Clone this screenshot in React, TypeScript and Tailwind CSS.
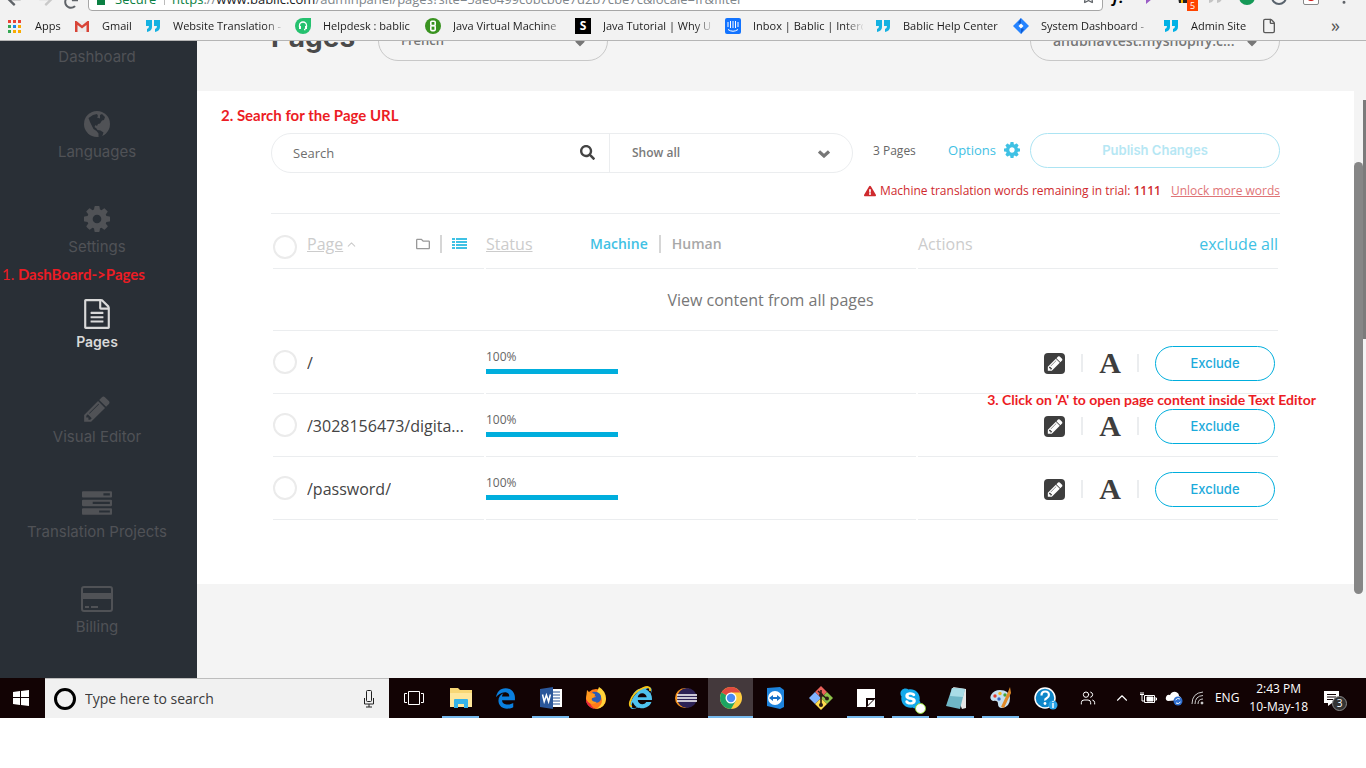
import type { ReactNode } from "react";
import {
  FaArrowLeft,
  FaArrowRight,
  FaCaretDown,
  FaEdgeLegacy,
  FaExclamationTriangle,
  FaInternetExplorer,
  FaRedo,
  FaRegFolder,
  FaRegStar,
  FaSearch,
  FaSkype,
} from "react-icons/fa";
import { ChevronUp, EllipsisVertical, File, Users } from "lucide-react";

type IconProps = { className?: string };

const FileTextIcon = ({ className }: IconProps) => (
  <svg viewBox="0 0 1792 1792" className={className} fill="currentColor" aria-hidden="true">
    <path d="M1596 380q28 28 48 76t20 88v1152q0 40-28 68t-68 28h-1344q-40 0-68-28t-28-68v-1600q0-40 28-68t68-28h896q40 0 88 20t76 48zm-444-244v376h376q-10-29-22-41l-313-313q-12-12-41-22zm384 1528v-1024h-416q-40 0-68-28t-28-68v-416h-768v1536h1280zm-1024-864q0-14 9-23t23-9h704q14 0 23 9t9 23v64q0 14-9 23t-23 9h-704q-14 0-23-9t-9-23v-64zm736 224q14 0 23 9t9 23v64q0 14-9 23t-23 9h-704q-14 0-23-9t-9-23v-64q0-14 9-23t23-9h704zm0 256q14 0 23 9t9 23v64q0 14-9 23t-23 9h-704q-14 0-23-9t-9-23v-64q0-14 9-23t23-9h704z" />
  </svg>
);

const PENCIL =
  "M491 1536l91-91-235-235-91 91v107h128v128h107zm523-928q0-22-22-22-10 0-17 7l-542 542q-7 7-7 17 0 22 22 22 10 0 17-7l542-542q7-7 7-17zm-54-192l416 416-832 832h-416v-416zm683 96q0 53-37 90l-166 166-416-416 166-165q36-38 90-38 53 0 91 38l235 234q37 39 37 91z";

const PencilIcon = ({ className }: IconProps) => (
  <svg viewBox="0 128 1792 1536" className={className} fill="currentColor" aria-hidden="true">
    <path d={PENCIL} />
  </svg>
);

const PencilSquareIcon = () => (
  <svg viewBox="0 0 21 21" className="size-[21px]" aria-hidden="true">
    <rect width="21" height="21" rx="4" fill="#3e3e3e" />
    <g transform="translate(2.6 1.8) scale(0.0096)" fill="#fff">
      <path d={PENCIL} />
    </g>
  </svg>
);

const GearIcon = ({ className }: IconProps) => (
  <svg viewBox="128 128 1536 1536" className={className} fill="currentColor" aria-hidden="true">
    <path d="M1152 896q0-106-75-181t-181-75-181 75-75 181 75 181 181 75 181-75 75-181zm512-109v222q0 12-8 23t-20 13l-185 28q-19 54-39 91 35 50 107 138 10 12 10 25t-9 23q-27 37-99 108t-94 71q-12 0-26-9l-138-108q-44 23-91 38-16 136-29 186-7 28-36 28h-222q-14 0-24.5-8.500t-11.500-21.500l-28-184q-49-16-90-37l-141 107q-10 9-25 9-14 0-25-11-126-114-165-168-7-10-7-23 0-12 8-23 15-21 51-66.500t54-70.500q-27-50-41-99l-183-27q-13-2-21-12.500t-8-23.500v-222q0-12 8-23t19-13l186-28q14-46 39-92-40-57-107-138-10-12-10-24 0-10 9-23 26-36 98.500-107.500t94.500-71.500q13 0 26 10l138 107q44-23 91-38 16-136 29-186 7-28 36-28h222q14 0 24.500 8.500t11.500 21.500l28 184q49 16 90 37l142-107q9-9 24-9 13 0 25 10 129 119 165 170 7 8 7 22 0 12-8 23-15 21-51 66.500t-54 70.500q26 50 41 98l183 28q13 2 21 12.500t8 23.500z" />
  </svg>
);

const GlobeIcon = ({ className }: IconProps) => (
  <svg viewBox="0 0 26 26" className={className} aria-hidden="true">
    <circle cx="13" cy="13" r="13" fill="currentColor" />
    <path d="M4.500 7L9 4l4-1 1 2-1 1.500 3 1L16 4l2-1 3 3-1 3-2 .5-2 3-2 .5-1 2-1.500-1-1 2 2 1.500 1 1.500 3 .5 3 2-1 3-2 2-2-1v-3l-2-2.500-3-2L6 11z" fill="#292f36" />
  </svg>
);

const ChevronDownIcon = ({ className }: IconProps) => (
  <svg viewBox="0 0 12 8" className={className} fill="none" stroke="currentColor" strokeWidth="3.200" aria-hidden="true">
    <path d="M1 1.500l5 4.500 5-4.500" />
  </svg>
);

const TasksIcon = ({ className }: IconProps) => (
  <svg viewBox="0 0 1792 1792" className={className} fill="currentColor" aria-hidden="true">
    <path d="M1024 1408h640v-128h-640v128zm-384-512h1024v-128h-1024v128zm640-512h384v-128h-384v128zm512 832v256q0 26-19 45t-45 19h-1664q-26 0-45-19t-19-45v-256q0-26 19-45t45-19h1664q26 0 45 19t19 45zm0-512v256q0 26-19 45t-45 19h-1664q-26 0-45-19t-19-45v-256q0-26 19-45t45-19h1664q26 0 45 19t19 45zm0-512v256q0 26-19 45t-45 19h-1664q-26 0-45-19t-19-45v-256q0-26 19-45t45-19h1664q26 0 45 19t19 45z" />
  </svg>
);

const CardIcon = ({ className }: IconProps) => (
  <svg viewBox="0 0 32 26" className={className} fill="currentColor" aria-hidden="true">
    <rect x="1" y="1" width="30" height="24" rx="2" fill="none" stroke="currentColor" strokeWidth="2" />
    <path d="M1 7h30v6H1zM4 20h4v2H4zM10 20h7v2h-7z" />
  </svg>
);

const DashboardIcon = ({ className }: IconProps) => (
  <svg viewBox="0 0 26 26" className={className} fill="currentColor" aria-hidden="true">
    <path d="M0 0h11v12H0zM14 0h12v8H14zM0 15h26v9H0z" />
  </svg>
);

const ListIcon = () => (
  <svg viewBox="0 0 15 12" className="h-3 w-[15px]" fill="currentColor" aria-hidden="true">
    <path d="M0 0h3v2H0zM4 0h11v2H4zM0 3h3v2H0zM4 3h11v2H4zM0 6h3v2H0zM4 6h11v2H4zM0 9h3v2H0zM4 9h11v2H4z" />
  </svg>
);

const QuotesIcon = ({ color = "#14b1e1" }: { color?: string }) => (
  <svg viewBox="0 0 16 16" className="size-4" fill={color} aria-hidden="true">
    <path d="M1 2h6v7q0 4-5 5v-3q2-.5 2-3H1zM9 2h6v7q0 4-5 5v-3q2-.5 2-3H9z" />
  </svg>
);

const AppsIcon = () => (
  <svg viewBox="0 0 16 16" className="size-4" aria-hidden="true">
    <path d="M1 2h3v3H1zM6 2h3v3H6zM11 2h3v3h-3z" fill="#ea4335" />
    <path d="M1 7h3v3H1zM1 12h3v3H1z" fill="#34a853" />
    <path d="M6 7h3v3H6z" fill="#1a86e8" />
    <path d="M6 12h3v3H6zM11 12h3v3h-3zM11 7h3v3h-3z" fill="#f9ab00" />
  </svg>
);

const GmailIcon = () => (
  <svg viewBox="0 0 16 16" className="size-4" aria-hidden="true">
    <path d="M1 3h14v11H1z" fill="#ececec" />
    <path d="M3.500 14V7L8 10.500 12.500 7v7H15V3h-1.500L8 7.500 2.500 3H1v11z" fill="#d84437" />
  </svg>
);

const HelpdeskIcon = () => (
  <svg viewBox="0 0 16 16" className="size-4" aria-hidden="true">
    <path d="M8 0h8v8a8 8 0 1 1-8-8z" fill="#25c16f" />
    <path d="M4.500 9V7.500a3.500 3.500 0 0 1 7 0V9M10.500 11.500H9" stroke="#fff" strokeWidth="1.300" fill="none" />
    <path d="M4 8h2v3H4zM10 8h2v3h-2z" fill="#fff" />
  </svg>
);

const JvmIcon = () => (
  <svg viewBox="0 0 16 16" className="size-4" aria-hidden="true">
    <circle cx="8" cy="8" r="8" fill="#399320" />
    <rect x="5.800" y="3.200" width="4.400" height="4.300" rx="1" fill="none" stroke="#fff" strokeWidth="1.600" />
    <rect x="5.800" y="7.800" width="4.400" height="4.800" rx="1" fill="none" stroke="#fff" strokeWidth="1.600" />
  </svg>
);

const IntercomIcon = () => (
  <svg viewBox="0 0 16 16" className="size-4" aria-hidden="true">
    <rect width="16" height="16" rx="2" fill="#1273ff" />
    <path d="M3 4v5M5.500 3v7M8 3v7M10.500 3v7M13 4v5M3 11.500q5 3.500 10 0" stroke="#fff" fill="none" />
  </svg>
);

const JiraIcon = () => (
  <svg viewBox="0 0 16 16" className="size-4" aria-hidden="true">
    <path d="M8 0l8 8-8 8-8-8z" fill="#2684ff" />
    <path d="M8 0l-3 5 3 1zM8 16l3-5-3-1z" fill="#0f5bd0" />
    <path d="M8 5.500L10.500 8 8 10.500 5.500 8z" fill="#fff" />
  </svg>
);

const bookmarks: { label: string; icon: ReactNode; width: string }[] = [
  { label: "Apps", icon: <AppsIcon />, width: "w-[67px]" },
  { label: "Gmail", icon: <GmailIcon />, width: "w-[71px]" },
  { label: "Website Translation -", icon: <QuotesIcon />, width: "w-[150px]" },
  { label: "Helpdesk : bablic", icon: <HelpdeskIcon />, width: "w-[130px]" },
  { label: "Java Virtual Machine", icon: <JvmIcon />, width: "w-[150px]" },
  {
    label: "Java Tutorial | Why U",
    icon: <span className="flex size-4 items-center justify-center bg-black font-['Open_Sans',sans-serif] text-xs font-bold text-white">S</span>,
    width: "w-[150px]",
  },
  { label: "Inbox | Bablic | Interc", icon: <IntercomIcon />, width: "w-[150px]" },
  { label: "Bablic Help Center", icon: <QuotesIcon />, width: "w-[138px]" },
  { label: "System Dashboard -", icon: <JiraIcon />, width: "w-[150px]" },
  { label: "Admin Site", icon: <QuotesIcon color="#00b1e5" />, width: "w-[98px]" },
];

function BrowserChrome() {
  return (
    <div className="shrink-0 border-b border-[#b5b5b5] bg-[#f2f2f2] font-['Open_Sans',sans-serif]">
      <div className="flex h-[11px] items-end overflow-hidden pr-[5px] text-[#5f6368]">
        <button className="mb-1 ml-1.5 shrink-0" aria-label="Back"><FaArrowLeft size={16} /></button>
        <button className="mb-1 ml-4 shrink-0 text-[#c9c9c9]" aria-label="Forward"><FaArrowRight size={16} /></button>
        <button className="mb-0.5 ml-2.5 shrink-0" aria-label="Reload"><FaRedo size={14} /></button>
        <div className="ml-2.5 flex h-7 flex-1 items-start rounded border border-[#a6a6a6] bg-white pt-[5px] pl-2 text-[13px] leading-5">
          <span className="mt-1.5 h-2.5 w-2 bg-[#0b8043]" />
          <span className="ml-2.5 w-[49px] text-[#0b8043]">Secure</span>
          <span className="mr-[7px] h-4 w-px bg-[#bbb]" />
          <span className="flex-1 whitespace-nowrap text-[#80868b]">
            <span className="text-[#0b8043]">https</span>://<span className="text-[#202124]">www.bablic.com</span>
            /adminpanel/pages?site=5ae6499c0bcb0e7d2b7cbe7c&amp;locale=fr&amp;filter
          </span>
          <FaRegStar size={15} className="mr-1.5" />
        </div>
        <div className="flex h-7 shrink-0 items-center">
          <span className="w-8 text-center text-[15px] font-bold text-black italic">f?</span>
          <svg viewBox="0 0 16 16" className="mx-2 size-4" fill="#9a5cc6"><path d="M3 0h10L9 10l-6 5z" /></svg>
          <span className="relative mx-2 size-4">
            <svg viewBox="0 0 16 16" className="size-4"><path d="M2 2h12v12H4z" fill="#222" /><path d="M6 8h2v6H6z" fill="#f2b300" /></svg>
            <span className="absolute top-[11px] left-3 flex h-[11px] w-[11px] items-center justify-center bg-[#ff4500] text-[9px] text-white">5</span>
          </span>
          <span className="mx-2"><QuotesIcon color="#c4c4c4" /></span>
          <span className="mx-2 size-4 rounded-full bg-[#159957]" />
          <span className="mx-2 size-4 rounded-full border-2 border-[#59636d]" />
          <span className="mx-2 flex size-4 items-center justify-center rounded-xs border border-[#888] bg-white"><span className="size-2 rounded-full bg-[#d01010]" /></span>
          <EllipsisVertical size={18} className="mx-2" />
        </div>
      </div>
      <nav className="flex h-[29px] items-center overflow-hidden pl-[7px] text-[11px] text-[#1c1c1c]">
        {bookmarks.map((b) => (
          <a key={b.label} href="#" className={`flex shrink-0 items-center gap-3 pt-px pr-3 ${b.width}`}>
            <span className="shrink-0">{b.icon}</span>
            <span className="flex-1 overflow-hidden whitespace-nowrap mask-[linear-gradient(to_right,#000_92px,transparent_112px)]">{b.label}</span>
          </a>
        ))}
        <a href="#" aria-label="Untitled bookmark"><File size={16} className="text-[#5a5a5a]" /></a>
        <button className="mr-[26px] mb-0.5 ml-auto text-lg text-[#555]" aria-label="More bookmarks">»</button>
      </nav>
    </div>
  );
}

const menu = [
  { label: "Dashboard", icon: <DashboardIcon className="size-[26px]" /> },
  { label: "Languages", icon: <GlobeIcon className="size-[26px]" /> },
  { label: "Settings", icon: <GearIcon className="size-[26px]" /> },
  { label: "Pages", icon: <FileTextIcon className="size-[30px]" />, active: true },
  { label: "Visual Editor", icon: <PencilIcon className="size-[30px]" /> },
  { label: "Translation Projects", icon: <TasksIcon className="size-[30px]" /> },
  { label: "Billing", icon: <CardIcon className="h-[26px] w-8" /> },
];

function Sidebar() {
  return (
    <aside className="relative flex w-[197px] shrink-0 flex-col justify-end overflow-hidden bg-[#292f36] pb-[41px]">
      <nav className="flex flex-col gap-[42px] pr-[3px] font-[Inter,sans-serif]">
        {menu.map((m) => (
          <a key={m.label} href="#" className={`flex flex-col items-center gap-[3px] ${m.active ? "text-sm font-semibold text-[#d9d9d9]" : "text-[15px] text-[#505256]"}`}>
            <span className="flex h-[30px] items-center">{m.icon}</span>
            <span className="leading-5">{m.label}</span>
          </a>
        ))}
      </nav>
      <Note className="top-[223px] left-0.5 text-[15px]"><span className="font-normal">1.</span> DashBoard-&gt;Pages</Note>
    </aside>
  );
}

function Note({ className, children }: { className: string; children: ReactNode }) {
  return (
    <p className={`absolute font-[Lato,sans-serif] leading-5 font-bold whitespace-nowrap text-[#ec1c24] ${className}`}>{children}</p>
  );
}

function Header() {
  return (
    <header className="flex h-[50px] items-end overflow-hidden px-[74px] pb-[30px] text-[#777]">
      <h1 className="mb-1.5 w-[107px] font-[Inter,sans-serif] text-[28px] leading-9 font-bold text-[#4a4a4a]">Pages</h1>
      <div className="relative w-[230px]">
        <select aria-label="Language" className="h-10 w-full appearance-none rounded-full border border-[#c8c8c8] pl-[22px] text-[13px] font-semibold">
          <option>French</option>
        </select>
        <FaCaretDown size={16} className="absolute top-3.5 right-5" />
      </div>
      <div className="relative ml-auto w-[250px]">
        <select aria-label="Site" className="h-10 w-full appearance-none rounded-full border border-[#c8c8c8] pl-[22px] text-sm font-semibold">
          <option>anubhavtest.myshopify.c...</option>
        </select>
        <FaCaretDown size={16} className="absolute top-3.5 right-5" />
      </div>
    </header>
  );
}

function Filters() {
  return (
    <div className="flex items-start">
      <div className="flex h-10 w-[582px] rounded-full border border-[#ebedef]">
        <div className="relative flex-1 border-r border-[#ebedef]">
          <input type="text" aria-label="Search" placeholder="Search" className="h-full w-full pl-[21px] text-[13px] outline-none placeholder:text-[#6e6e6e]" />
          <FaSearch size={15} className="absolute top-[11px] right-3.5 text-[#444]" />
        </div>
        <div className="relative w-[242px]">
          <select aria-label="Show" className="h-full w-full appearance-none pl-[22px] text-xs font-semibold text-[#7a7a7a] outline-none">
            <option>Show all</option>
          </select>
          <ChevronDownIcon className="absolute top-4 right-[22px] h-2 w-3 text-[#777]" />
        </div>
      </div>
      <span className="mt-2 ml-5 text-xs leading-5 whitespace-nowrap text-[#666]">3 Pages</span>
      <button className="mt-[7px] ml-auto flex items-center gap-2 text-[13px] leading-5 text-[#3fc1e4]">
        Options <GearIcon className="size-4" />
      </button>
      <button disabled className="ml-2.5 h-[35px] w-[250px] rounded-full border border-[#ace4f3] font-[Inter,sans-serif] text-[13px] font-semibold text-[#b6e7f4]">
        Publish Changes
      </button>
    </div>
  );
}

const pages = [
  { path: "/", percent: 100 },
  { path: "/3028156473/digita...", percent: 100 },
  { path: "/password/", percent: 100 },
];

function Check({ label }: { label: string }) {
  return <input type="checkbox" aria-label={label} className="size-6 shrink-0 appearance-none rounded-full border-2 border-[#ebebeb]" />;
}

const Bar = () => <span className="h-[18px] w-0.5 bg-[#ebedef]" />;

function PagesTable() {
  return (
    <table className="w-full table-fixed border-separate border-spacing-0.5">
      <colgroup>
        <col className="w-[211px]" />
        <col />
        <col className="w-[360px]" />
      </colgroup>
      <thead>
        <tr className="text-left text-base text-[#ccc]">
          <th className="h-[53px] border-b border-[#ebedef] p-0 font-normal">
            <div className="flex items-center pt-1">
              <span className="mt-1.5 flex"><Check label="Select all pages" /></span>
              <button className="ml-2.5 flex items-center gap-0.5"><span className="underline">Page</span> <ChevronUp size={13} /></button>
              <button className="ml-auto text-[#999]" aria-label="Folder view"><FaRegFolder size={14} /></button>
              <span className="mx-2.5 h-[18px] w-0.5 bg-[#d6d6d6]" />
              <button className="mr-[17px] text-[#3fc1e4]" aria-label="List view"><ListIcon /></button>
            </div>
          </th>
          <th className="border-b border-[#ebedef] p-0 font-normal">
            <div className="flex items-center pt-1">
              <button className="w-[104px] text-left underline">Status</button>
              <button className="text-sm font-semibold text-[#3fc1e4]">Machine</button>
              <span className="mx-[11px] h-[18px] w-0.5 bg-[#d6d6d6]" />
              <button className="text-sm font-semibold text-[#a8a8a8]">Human</button>
            </div>
          </th>
          <th className="border-b border-[#ebedef] p-0 font-normal">
            <div className="flex items-center justify-between pt-1">
              <span>Actions</span>
              <button className="text-[#3fc1e4]">exclude all</button>
            </div>
          </th>
        </tr>
      </thead>
      <tbody>
        <tr>
          <td colSpan={3} className="h-[60px] border-b border-[#ebedef] p-0 text-center">
            <button className="mr-2.5 mb-0.5 text-base text-[#777]">View content from all pages</button>
          </td>
        </tr>
        {pages.map((p) => (
          <tr key={p.path}>
            <td className="h-[61px] border-b border-[#ebedef] p-0">
              <div className="flex items-center gap-2.5 pb-0.5 text-[#444]">
                <Check label={`Select ${p.path}`} />
                <span className="truncate pt-0.5">{p.path}</span>
              </div>
            </td>
            <td className="border-b border-[#ebedef] p-0">
              <div className="w-[132px] pb-1">
                <div className="text-xs leading-4 text-[#666]">{p.percent}%</div>
                <div className="mt-1 h-[5px] bg-[#e6e6e6]">
                  <div className="h-full bg-[#00aedd]" style={{ width: `${p.percent}%` }} />
                </div>
              </div>
            </td>
            <td className="border-b border-[#ebedef] p-0">
              <div className="flex items-center justify-end gap-4 pr-[3px]">
                <button aria-label="Edit page"><PencilSquareIcon /></button>
                <Bar />
                <button className="font-['Liberation_Serif',serif] text-3xl leading-8 font-bold text-[#3e3e3e]" title="Open text editor">A</button>
                <Bar />
                <button className="h-[35px] w-[120px] rounded-full border border-[#00aedd] pt-0.5 font-[Inter,sans-serif] text-[13px] font-medium text-[#1caadb]">Exclude</button>
              </div>
            </td>
          </tr>
        ))}
      </tbody>
    </table>
  );
}

const FolderApp = () => (
  <svg viewBox="0 0 24 24" className="size-6">
    <path d="M1 2h8l2 2h12v17H1z" fill="#f8d775" />
    <path d="M1 7h22v14H1z" fill="#ffe79b" />
    <path d="M5 22v-8q0-1 1-1h12q1 0 1 1v8h-4v-4H9v4z" fill="#35b3e8" />
  </svg>
);

const WordApp = () => (
  <svg viewBox="0 0 24 24" className="size-6">
    <path d="M12 3h11v18H12z" fill="#fff" />
    <path d="M14 6h7M14 9h7M14 12h7M14 15h7M14 18h7" stroke="#2b579a" strokeWidth="1.200" />
    <path d="M1 3l13-2v22L1 21z" fill="#2b579a" />
    <path d="M3.500 8.500l1.700 7 2.200-6.500 2.200 6.500 1.800-7" fill="none" stroke="#fff" strokeWidth="1.500" />
  </svg>
);

const FirefoxApp = () => (
  <svg viewBox="0 0 24 24" className="size-6">
    <circle cx="12" cy="13" r="10" fill="#ff7a1a" />
    <path d="M15 1q7 4 7 12-1 9-10 10 6-3 6-9-1-6-5-8z" fill="#ffd43a" />
    <path d="M2 11q-1 10 9 12-6-4-5-10l2-6z" fill="#e8263f" />
    <path d="M8 6q7-1 9 4 1 6-5 7-5-1-4-5l4-1z" fill="#2a5bb8" />
    <path d="M2 13l1-9 3 3 5 1-1 3-3 2q1 3 6 3-5 4-9 0z" fill="#ff9a1e" />
  </svg>
);

const IeApp = () => (
  <span className="relative flex text-[#4fc3ee]">
    <FaInternetExplorer size={22} />
    <svg viewBox="0 0 24 24" className="absolute -top-0.5 -left-0.5 size-6"><path d="M4 21Q1 22 2 17 5 7 15 3q8-3 7 3" fill="none" stroke="#f5c518" strokeWidth="1.800" /></svg>
  </span>
);

const EclipseApp = () => (
  <svg viewBox="0 0 24 24" className="size-6">
    <circle cx="11" cy="12" r="10" fill="#f7941e" />
    <circle cx="13" cy="12" r="10" fill="#2c2255" />
    <path d="M3 9h20M3 12h20M3 15h20" stroke="#fff" strokeWidth="1.400" />
  </svg>
);

const ChromeApp = () => (
  <svg viewBox="0 0 24 24" className="size-6">
    <circle cx="12" cy="12" r="11" fill="#ffcd40" />
    <path d="M12 12L2.500 6.500A11 11 0 0 1 21.500 6.500H12z" fill="#e04a3f" />
    <path d="M2.500 6.500A11 11 0 0 0 12 23l4.800-8.200L12 12z" fill="#1da462" />
    <circle cx="12" cy="12" r="5.500" fill="#fff" />
    <circle cx="12" cy="12" r="4.200" fill="#4a8af4" />
  </svg>
);

const TeamViewerApp = () => (
  <svg viewBox="0 0 24 24" className="size-6">
    <path d="M3 2l13-1 4 3v17l-4 2-13-3z" fill="#1d83dc" />
    <circle cx="11" cy="12" r="7" fill="#fff" />
    <path d="M5 12l4-3v2h4V9l4 3-4 3v-2H9v2z" fill="#1670c8" />
  </svg>
);

const GitApp = () => (
  <svg viewBox="0 0 24 24" className="size-6">
    <path d="M12 0l6 6-6 6-6-6z" fill="#e8615a" />
    <path d="M6 6l6 6-6 6-6-6z" fill="#80b3ff" />
    <path d="M18 6l6 6-6 6-6-6z" fill="#8dc149" />
    <path d="M12 12l6 6-6 6-6-6z" fill="#ffdc4e" />
    <path d="M12 4v15M9 5l9 8" stroke="#2b1a14" strokeWidth="1.600" />
    <circle cx="12" cy="19" r="2" fill="#2b1a14" />
    <circle cx="18" cy="12.500" r="2" fill="#2b1a14" />
    <circle cx="12" cy="9" r="2" fill="#2b1a14" />
  </svg>
);

const NotesApp = () => (
  <svg viewBox="0 0 24 24" className="size-6">
    <path d="M3 3h18v18H3z" fill="#fff" />
    <path d="M12 12h9v1l-8 8h-1z" fill="#120304" />
    <path d="M14 14h5l-5 5z" fill="#fff" />
  </svg>
);

const SkypeApp = () => (
  <span className="relative flex">
    <span className="absolute inset-1 rounded-full bg-white" />
    <FaSkype size={23} className="relative text-[#14a9ea]" />
    <span className="absolute -right-1 -bottom-1 size-[11px] rounded-full border border-[#8cd12f] bg-white" />
  </span>
);

const NotepadApp = () => (
  <svg viewBox="0 0 24 24" className="size-6">
    <path d="M9 1l13 2v19l-4 1z" fill="#e4e6e6" />
    <path d="M8 2l13 1-5 20-14-3z" fill="#6fb6c6" />
    <path d="M8 2l13 1-2 8-13-1z" fill="#a9dce6" />
  </svg>
);

const PaintApp = () => (
  <svg viewBox="0 0 24 24" className="size-6">
    <path d="M11 4q9 0 10 8 0 9-8 10-4 0-4-4t-5-3q-4-2-2-6 3-5 9-5z" fill="#c5e0f0" />
    <circle cx="6" cy="10" r="1.700" fill="#e23b2e" />
    <circle cx="11" cy="7.500" r="1.700" fill="#f4b71b" />
    <circle cx="16" cy="9" r="1.700" fill="#45a53a" />
    <circle cx="10" cy="13" r="1.700" fill="#3567c4" />
    <path d="M21 1l1 6-7 15-3-1 7-15z" fill="#e08a28" />
  </svg>
);

const HelpApp = () => (
  <svg viewBox="0 0 24 24" className="size-6">
    <circle cx="11" cy="12" r="10" fill="#0d86c9" stroke="#fff" strokeWidth="1.500" />
    <path d="M7.500 9.500q0-4 3.700-4t3.700 3.500q0 2-2 3t-1.800 2.500" fill="none" stroke="#fff" strokeWidth="2.200" />
    <circle cx="11" cy="17.500" r="1.400" fill="#fff" />
    <circle cx="19" cy="19" r="4.500" fill="#2aa4e8" />
    <path d="M19 17v5M19 15v1" stroke="#fff" strokeWidth="1.400" />
  </svg>
);

const apps: { name: string; icon: ReactNode; open?: boolean; focused?: boolean }[] = [
  { name: "File Explorer", icon: <FolderApp />, open: true },
  { name: "Edge", icon: <FaEdgeLegacy size={21} className="text-[#0a7fde]" /> },
  { name: "Word", icon: <WordApp />, open: true },
  { name: "Firefox", icon: <FirefoxApp /> },
  { name: "Internet Explorer", icon: <IeApp /> },
  { name: "Eclipse", icon: <EclipseApp /> },
  { name: "Chrome", icon: <ChromeApp />, open: true, focused: true },
  { name: "TeamViewer", icon: <TeamViewerApp /> },
  { name: "Git", icon: <GitApp /> },
  { name: "Sticky Notes", icon: <NotesApp />, open: true },
  { name: "Skype", icon: <SkypeApp />, open: true },
  { name: "Notepad", icon: <NotepadApp />, open: true },
  { name: "Paint", icon: <PaintApp />, open: true },
  { name: "Help", icon: <HelpApp /> },
];

function Taskbar() {
  return (
    <footer className="flex h-10 shrink-0 items-stretch bg-[#120304] font-['Open_Sans',sans-serif] text-white">
      <button className="flex w-[45px] shrink-0 items-center justify-center pr-1" aria-label="Start">
        <svg viewBox="0 0 16 16" className="size-4" fill="#fff"><path d="M0 2l7-1v6H0zM8 1l8-1v7H8zM0 8h7v7l-7-1zM8 8h8v8l-8-1z" /></svg>
      </button>
      <div className="flex w-[344px] shrink-0 items-center border-t border-[#bdbdbd] bg-[#f1f1f1] pr-3.5 pl-[9px]">
        <span className="size-[22px] shrink-0 rounded-full border-3 border-black" />
        <input type="text" aria-label="Search Windows" placeholder="Type here to search" className="ml-[9px] min-w-0 flex-1 text-sm outline-none placeholder:text-[#3b3b3b]" />
        <svg viewBox="0 0 12 18" className="h-[18px] w-3" fill="none" stroke="#222"><rect x="3.500" y="0.500" width="5" height="11" rx="1" /><path d="M1.500 8v6h9V8M6 14v3M3 17h6" /></svg>
      </div>
      <button className="flex w-[49px] shrink-0 items-center justify-center" aria-label="Task View">
        <svg viewBox="0 0 20 14" className="h-3.5 w-5" fill="none" stroke="#fff"><path d="M4.500.5h11v13h-11zM3 2.500H.5v9H3M17 2.500h2.500v9H17" /></svg>
      </button>
      {apps.map((a) => (
        <button
          key={a.name}
          aria-label={a.name}
          className={`relative flex w-[45px] shrink-0 items-center justify-center ${a.focused ? "bg-[#44393c]" : ""}`}
        >
          {a.icon}
          {a.open && <span className={`absolute bottom-0 h-0.5 bg-[#76b9ed] ${a.focused ? "inset-x-0" : "inset-x-1"}`} />}
        </button>
      ))}
      <button className="flex w-10 shrink-0 items-center justify-center" aria-label="People"><Users size={16} strokeWidth={1.500} /></button>
      <div className="ml-auto flex items-center pr-[26px]">
        <ChevronUp size={18} strokeWidth={1.500} />
        <svg viewBox="0 0 18 14" className="ml-2 h-3.5 w-[18px]" fill="none" stroke="#fff"><path d="M5.500 4.500h10v7h-10zM16 7h1.500v2H16M1 3.500h4M2 1v2M4 1v2M3 4v6h2" /><path d="M8 6h6v4H8z" fill="#fff" /></svg>
        <svg viewBox="0 0 18 16" className="ml-2 h-4 w-[18px]">
          <path d="M3 11q-3-1-2-4t4-2q2-4 6-3 3 1 3 4 3 1 2 4z" fill="#fff" />
          <circle cx="13" cy="11" r="4.500" fill="#2f6fd0" />
          <path d="M10.500 10q2-2.500 4.500-1M15.500 12q-2 2.500-4.500 1" stroke="#fff" fill="none" />
        </svg>
        <svg viewBox="0 0 14 14" className="ml-2 size-3.5" fill="none" stroke="#ccc"><path d="M1 13Q1 2 12 1M4 13Q4 5 12 4.500M7 13q0-5 5-5" /><circle cx="11" cy="12" r="1" fill="#fff" /></svg>
        <span className="ml-2.5 text-xs">ENG</span>
        <div className="ml-2.5 text-center text-xs leading-[18px] whitespace-nowrap">
          <div>2:43 PM</div>
          <div>10-May-18</div>
        </div>
        <button className="relative ml-4" aria-label="Notifications">
          <svg viewBox="0 0 16 16" className="size-4"><path d="M0 1h15v12H8l-4 3v-3H0z" fill="#fff" /><path d="M3 4.500h9M3 7h9M3 9.500h6" stroke="#120304" /></svg>
          <span className="absolute top-1.5 left-2 flex size-[15px] items-center justify-center rounded-full border border-[#888] bg-[#333] text-[10px]">3</span>
        </button>
      </div>
    </footer>
  );
}

export default function App() {
  return (
    <div className="flex h-screen flex-col bg-white pb-[50px]">
      <BrowserChrome />
      <div className="flex min-h-0 flex-1 bg-[#f4f4f4] font-['Open_Sans',sans-serif]">
        <Sidebar />
        <main className="min-w-0 flex-1">
          <Header />
          <section className="relative bg-white px-[74px] pt-[42px] pb-[62px]">
            <Note className="top-3.5 left-6 text-[15px]">2. Search for the Page URL</Note>
            <Filters />
            <div className="flex h-[41px] items-start justify-end gap-2.5 border-b border-[#ebedef] pt-2 text-xs leading-5 text-[#cf2a2e]">
              <span className="flex items-center gap-1">
                <FaExclamationTriangle size={12} />
                <span>Machine translation words remaining in trial: <b className="font-semibold">1111</b></span>
              </span>
              <a href="#" className="text-[#df7477] underline">Unlock more words</a>
            </div>
            <PagesTable />
            <Note className="top-[299px] right-[38px] text-sm">3. Click on 'A' to open page content inside Text Editor</Note>
          </section>
        </main>
        <div className="w-[9px] shrink-0 pt-[121px]">
          <div className="h-[432px] rounded-full bg-[#868686]" />
        </div>
        <div className="w-[3px] shrink-0 pt-[59px]">
          <div className="h-[239px] bg-[#7b7b7b]" />
        </div>
      </div>
      <Taskbar />
    </div>
  );
}
